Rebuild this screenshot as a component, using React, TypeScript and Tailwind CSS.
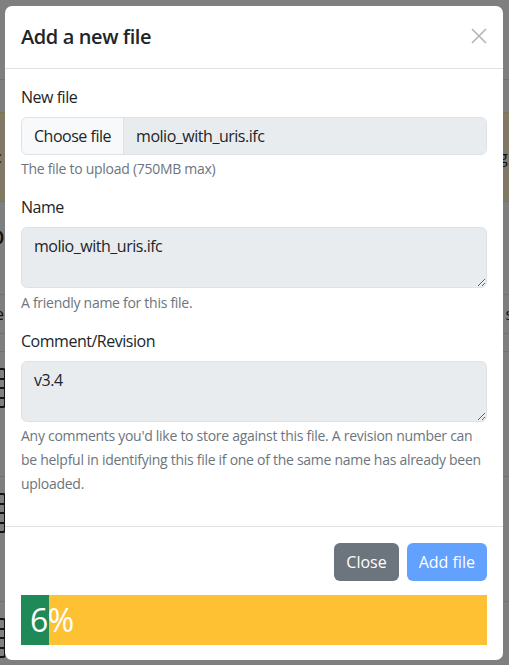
import React from "react";

function BackgroundPage() {
  return (
    <div className="h-[665px] w-[509px] bg-white text-[#212529] overflow-hidden">
      <div className="h-[80px] border-b border-[#dee2e6]" />
      <div className="mt-[32px] h-[90px] bg-[#fff3cd] border-y border-[#ffe69c] flex items-center justify-between text-[16px] text-[#052c65]">
        <span className="-ml-[2px] text-[#664d03]">:</span>
        <span className="-mr-[3px]">g.</span>
      </div>
      <div className="h-[92px] flex items-start pt-[14px]">
        <span className="-ml-[12px] text-[28px] font-medium leading-[36px]">oc</span>
      </div>
      <div className="h-[40px] border-y border-[#dee2e6] flex items-center justify-between text-[16px]">
        <span className="-ml-[5px]">e</span>
        <span className="-mr-[4px]">s</span>
      </div>
      <div className="h-[18px] border-b border-[#dee2e6]" />
      {[0, 1, 2].map((i) => (
        <div key={i} className="h-[125px] border-b border-[#dee2e6] flex items-start">
          <div className="mt-[16px] -ml-[8px] flex h-[40px] w-[14px] flex-col justify-evenly rounded-[3px] border-2 border-[#212529] bg-white">
            <div className="h-[2px] bg-[#212529]" />
            <div className="h-[2px] bg-[#212529]" />
            <div className="h-[2px] bg-[#212529]" />
          </div>
        </div>
      ))}
    </div>
  );
}

function Help({ children, className = "" }: { children: React.ReactNode; className?: string }) {
  return <div className={"text-[14px] tracking-[-0.02em] text-[#6c757d] " + className}>{children}</div>;
}

export default function App() {
  return (
    <div className="relative h-[665px] w-[509px] overflow-hidden font-['Open_Sans','Noto_Sans',sans-serif]">
      <BackgroundPage />
      <div className="absolute inset-0 bg-black/50">
        <div className="ml-[5px] mt-[6px] w-[498px] rounded-[7px] bg-white text-[#212529]">
          <div className="flex h-[63px] items-center justify-between border-b border-[#dee2e6] px-4">
            <h5 className="text-[20px] font-semibold leading-[30px] tracking-[-0.02em]">Add a new file</h5>
            <svg width="16" height="16" viewBox="0 0 16 16" className="mt-[-2px]">
              <path d="M1 1L15 15M15 1L1 15" stroke="#b5b5b5" strokeWidth="1.6" fill="none" />
            </svg>
          </div>
          <div className="px-4 pt-4 pb-[30px] tracking-[-0.03em]">
            <label className="block text-[16px] leading-6 mb-2">New file</label>
            <div className="flex h-[38px] overflow-hidden rounded-[6px] border border-[#dee2e6] bg-[#e9ecef] text-[16px]">
              <div className="flex items-center border-r border-[#dee2e6] bg-[#f8f9fa] px-3">Choose file</div>
              <div className="flex items-center px-3">molio_with_uris.ifc</div>
            </div>
            <Help className="mt-[3px] leading-[21px]">The file to upload (750MB max)</Help>

            <label className="mt-4 block text-[16px] leading-6 mb-2">Name</label>
            <textarea
              readOnly
              value="molio_with_uris.ifc"
              className="block h-[61px] w-full rounded-[6px] border border-[#dee2e6] bg-[#e9ecef] px-3 py-[6px] text-[16px] leading-6 tracking-[-0.03em] text-[#212529] outline-none"
            />
            <Help className="mt-1 leading-[21px]">A friendly name for this file.</Help>

            <label className="mt-4 block text-[16px] leading-6 mb-2">Comment/Revision</label>
            <textarea
              readOnly
              value="v3.4"
              className="block h-[61px] w-full rounded-[6px] border border-[#dee2e6] bg-[#e9ecef] px-3 py-[6px] text-[16px] leading-6 tracking-[-0.03em] text-[#212529] outline-none"
            />
            <Help className="mt-[2px] leading-6">
              Any comments you'd like to store against this file. A revision number can be helpful in identifying this
              file if one of the same name has already been uploaded.
            </Help>
          </div>
          <div className="border-t border-[#dee2e6] px-4 pt-4 pb-[15px]">
            <div className="flex justify-end gap-2">
              <button className="h-[38px] rounded-[6px] bg-[#6c757d] px-3 text-[16px] text-white">Close</button>
              <button className="h-[38px] rounded-[6px] bg-[#62a1fe] px-3 text-[16px] text-white">Add file</button>
            </div>
            <div className="mt-[14px] flex h-[50px] bg-[#fec134]">
              <div className="relative flex w-[28px] items-center bg-[#1f8957]">
                <span className="absolute left-[9px] whitespace-nowrap text-[32px] leading-none tracking-[-0.02em] text-white">6%</span>
              </div>
            </div>
          </div>
        </div>
      </div>
    </div>
  );
}
